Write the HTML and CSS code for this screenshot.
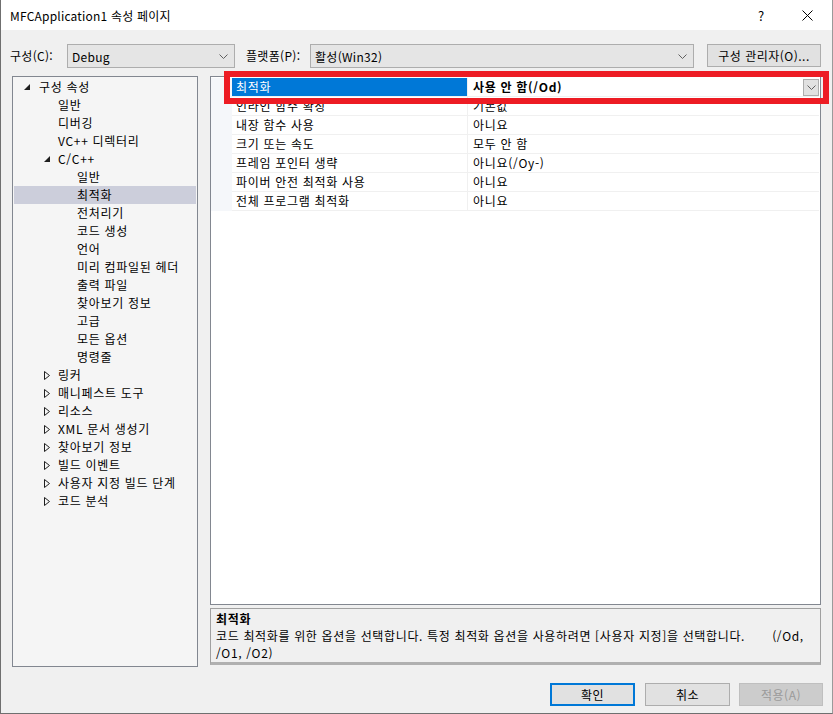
FILE: index.html
```html
<!DOCTYPE html>
<html lang="ko">
<head>
    <meta charset="UTF-8">
    <title>MFCApplication1 속성 페이지</title>
    <link rel="stylesheet" href="styles.css">
</head>
<body>
<div class="window">
    <div class="titlebar">
        <span class="title">MFCApplication1 속성 페이지</span>
        <span class="help">?</span>
        <span class="close">
            <svg width="11" height="11" viewBox="0 0 11 11"><path d="M0.5 0.5 L10.5 10.5 M10.5 0.5 L0.5 10.5" stroke="#000" stroke-width="1" fill="none"/></svg>
        </span>
    </div>

    <div class="toolbar">
        <span class="lbl lbl-config">구성(C):</span>
        <div class="combo combo-config">
            <span>Debug</span>
            <svg class="chev" width="9" height="5" viewBox="0 0 9 5"><polyline points="0.5,0.5 4.5,4.5 8.5,0.5" fill="none" stroke="#606060"/></svg>
        </div>
        <span class="lbl lbl-platform">플랫폼(P):</span>
        <div class="combo combo-platform">
            <span>활성(Win32)</span>
            <svg class="chev" width="9" height="5" viewBox="0 0 9 5"><polyline points="0.5,0.5 4.5,4.5 8.5,0.5" fill="none" stroke="#606060"/></svg>
        </div>
        <button class="btn btn-manager">구성 관리자(O)...</button>
    </div>

    <div class="main">
        <ul class="tree">
            <li class="lv0"><svg class="arrow" width="6" height="6" viewBox="0 0 6 6"><polygon points="6,0 6,6 0,6" fill="#1e1e1e"/></svg>구성 속성</li>
            <li class="lv1">일반</li>
            <li class="lv1">디버깅</li>
            <li class="lv1">VC++ 디렉터리</li>
            <li class="lv1"><svg class="arrow" width="6" height="6" viewBox="0 0 6 6"><polygon points="6,0 6,6 0,6" fill="#1e1e1e"/></svg>C/C++</li>
            <li class="lv2">일반</li>
            <li class="lv2 active">최적화</li>
            <li class="lv2">전처리기</li>
            <li class="lv2">코드 생성</li>
            <li class="lv2">언어</li>
            <li class="lv2">미리 컴파일된 헤더</li>
            <li class="lv2">출력 파일</li>
            <li class="lv2">찾아보기 정보</li>
            <li class="lv2">고급</li>
            <li class="lv2">모든 옵션</li>
            <li class="lv2">명령줄</li>
            <li class="lv1"><svg class="arrow" width="6" height="9" viewBox="0 0 6 9"><polygon points="0.5,0.5 5.5,4.5 0.5,8.5" fill="none" stroke="#1e1e1e"/></svg>링커</li>
            <li class="lv1"><svg class="arrow" width="6" height="9" viewBox="0 0 6 9"><polygon points="0.5,0.5 5.5,4.5 0.5,8.5" fill="none" stroke="#1e1e1e"/></svg>매니페스트 도구</li>
            <li class="lv1"><svg class="arrow" width="6" height="9" viewBox="0 0 6 9"><polygon points="0.5,0.5 5.5,4.5 0.5,8.5" fill="none" stroke="#1e1e1e"/></svg>리소스</li>
            <li class="lv1"><svg class="arrow" width="6" height="9" viewBox="0 0 6 9"><polygon points="0.5,0.5 5.5,4.5 0.5,8.5" fill="none" stroke="#1e1e1e"/></svg>XML 문서 생성기</li>
            <li class="lv1"><svg class="arrow" width="6" height="9" viewBox="0 0 6 9"><polygon points="0.5,0.5 5.5,4.5 0.5,8.5" fill="none" stroke="#1e1e1e"/></svg>찾아보기 정보</li>
            <li class="lv1"><svg class="arrow" width="6" height="9" viewBox="0 0 6 9"><polygon points="0.5,0.5 5.5,4.5 0.5,8.5" fill="none" stroke="#1e1e1e"/></svg>빌드 이벤트</li>
            <li class="lv1"><svg class="arrow" width="6" height="9" viewBox="0 0 6 9"><polygon points="0.5,0.5 5.5,4.5 0.5,8.5" fill="none" stroke="#1e1e1e"/></svg>사용자 지정 빌드 단계</li>
            <li class="lv1"><svg class="arrow" width="6" height="9" viewBox="0 0 6 9"><polygon points="0.5,0.5 5.5,4.5 0.5,8.5" fill="none" stroke="#1e1e1e"/></svg>코드 분석</li>
        </ul>

        <div class="right">
            <div class="grid">
                <div class="row selected">
                    <div class="gutter"></div>
                    <div class="name">최적화</div>
                    <div class="value">
                        <span>사용 안 함(/Od)</span>
                        <span class="dd">
                            <svg width="9" height="5" viewBox="0 0 9 5"><polyline points="0.5,0.5 4.5,4.5 8.5,0.5" fill="none" stroke="#606060"/></svg>
                        </span>
                    </div>
                </div>
                <div class="row"><div class="gutter"></div><div class="name">인라인 함수 확장</div><div class="value">기본값</div></div>
                <div class="row"><div class="gutter"></div><div class="name">내장 함수 사용</div><div class="value">아니요</div></div>
                <div class="row"><div class="gutter"></div><div class="name">크기 또는 속도</div><div class="value">모두 안 함</div></div>
                <div class="row"><div class="gutter"></div><div class="name">프레임 포인터 생략</div><div class="value">아니요(/Oy-)</div></div>
                <div class="row"><div class="gutter"></div><div class="name">파이버 안전 최적화 사용</div><div class="value">아니요</div></div>
                <div class="row"><div class="gutter"></div><div class="name">전체 프로그램 최적화</div><div class="value">아니요</div></div>

                <!-- 빨간 강조 박스 -->
                <div class="highlight"></div>
            </div>

            <div class="desc">
                <div class="desc-title">최적화</div>
                <div class="desc-text">코드 최적화를 위한 옵션을 선택합니다. 특정 최적화 옵션을 사용하려면 [사용자 지정]을 선택합니다.<span class="tab">(/Od,</span><br>/O1, /O2)</div>
            </div>
        </div>
    </div>

    <div class="footer">
        <button class="btn btn-ok">확인</button>
        <button class="btn btn-cancel">취소</button>
        <button class="btn btn-apply" disabled>적용(A)</button>
    </div>
</div>
</body>
</html>
```

FILE: styles.css
```css
body {
    margin: 0;
    padding: 0;
    font-family: "Noto Sans CJK KR", "Noto Sans", sans-serif;
    font-size: 12px;
    color: #000;
}

.window {
    width: 833px;
    height: 714px;
    box-sizing: border-box;
    border-left: 1px solid #6f6f6f;
    border-right: 1px solid #9a9a9a;
    border-bottom: 1px solid #6f6f6f;
    background-color: #f0f0f0;
    display: flex;
    flex-direction: column;
}

/* 타이틀바 */
.titlebar {
    height: 30px;
    background-color: #fff;
    display: flex;
    align-items: center;
    padding-left: 9px;
}

.title {
    font-size: 12px;
    letter-spacing: 0.2px;
    flex: 1;
}

.help {
    font-size: 13px;
    width: 46px;
    text-align: center;
}

.close {
    width: 46px;
    display: flex;
    justify-content: center;
    margin-right: 2px;
}

/* 구성 / 플랫폼 줄 */
.toolbar {
    height: 46px;
    box-sizing: border-box;
    padding: 14px 0 0 9px;
    display: flex;
    align-items: flex-start;
    letter-spacing: 0.3px;
}

.lbl {
    height: 24px;
    line-height: 24px;
}

.lbl-config {
    width: 57px;
}

.lbl-platform {
    width: 64px;
    margin-left: 11px;
}

.combo {
    height: 24px;
    box-sizing: border-box;
    border: 1px solid #adadad;
    background-color: #e5e5e5;
    display: flex;
    align-items: center;
    justify-content: space-between;
    padding: 0 6px 0 4px;
}

.combo-config {
    width: 168px;
}

.combo-platform {
    width: 384px;
}

.btn {
    font-family: inherit;
    font-size: 12px;
    letter-spacing: 0.5px;
    color: #000;
    background-color: #e1e1e1;
    border: 1px solid #adadad;
    padding: 0;
    box-sizing: border-box;
}

.btn-manager {
    width: 114px;
    height: 23px;
    margin-left: 13px;
}

/* 본문 */
.main {
    height: 591px;
    display: flex;
    padding-left: 11px;
}

.tree {
    width: 186px;
    box-sizing: border-box;
    margin: 0 12px 0 0;
    padding: 1px 1px 0 1px;
    list-style: none;
    border: 1px solid #828790;
    background-color: #f5f5f5;
    letter-spacing: 0.7px;
}

.tree li {
    height: 18px;
    line-height: 18px;
    position: relative;
    white-space: nowrap;
}

.tree .lv0 {
    padding-left: 25px;
}

.tree .lv1 {
    padding-left: 44px;
}

.tree .lv2 {
    padding-left: 63px;
}

.tree .active {
    background-color: #cccedb;
}

.tree .arrow {
    position: absolute;
    top: 6px;
}

.tree .lv0 .arrow {
    left: 10px;
}

.tree .lv1 .arrow {
    left: 30px;
    top: 5px;
}

.tree .lv1 .arrow[height="6"] {
    top: 6px;
}

.right {
    width: 611px;
    display: flex;
    flex-direction: column;
}

.grid {
    height: 529px;
    box-sizing: border-box;
    border: 1px solid #828790;
    background-color: #fff;
    padding-top: 1px;
    position: relative;
    letter-spacing: 0.7px;
}

.row {
    display: flex;
    height: 19px;
}

.row .gutter {
    width: 21px;
    background-color: #f5f7fa;
}

.row .name {
    width: 231px;
    padding-left: 4px;
    line-height: 18px;
    border-bottom: 1px solid #f0f0f0;
    border-right: 1px solid #f0f0f0;
    white-space: nowrap;
}

.row .value {
    width: 346px;
    padding-left: 5px;
    line-height: 18px;
    border-bottom: 1px solid #f0f0f0;
    display: flex;
    justify-content: space-between;
}

.row.selected .name {
    background-color: #0078d7;
    color: #fff;
}

.row.selected .value {
    font-weight: bold;
}

.dd {
    width: 16px;
    height: 17px;
    box-sizing: border-box;
    margin-top: 1px;
    border: 1px solid #adadad;
    background-color: #e1e1e1;
    display: flex;
    align-items: center;
    justify-content: center;
}

.highlight {
    position: absolute;
    left: 13px;
    top: -6px;
    width: 605px;
    height: 33px;
    box-sizing: border-box;
    border: 6px solid #ed1c24;
}

/* 설명 영역 */
.desc {
    margin-top: 3px;
    height: 57px;
    box-sizing: border-box;
    border: 1px solid #a0a0a0;
    border-bottom: 3px solid #b0b0b0;
    padding: 1px 0 0 5px;
    line-height: 17px;
    letter-spacing: 0.65px;
}

.desc-title {
    font-weight: bold;
}

.desc-text .tab {
    margin-left: 27px;
}

/* 하단 버튼 */
.footer {
    display: flex;
    justify-content: flex-end;
    padding: 16px 9px 0 0;
}

.footer .btn {
    height: 23px;
    width: 85px;
    margin-left: 10px;
}

.btn-ok {
    border: 2px solid #0078d7 !important;
}

.btn-apply {
    width: 84px !important;
    margin-left: 9px !important;
    background-color: #cccccc;
    border-color: #bfbfbf;
    color: #9a9a9a;
}
```
